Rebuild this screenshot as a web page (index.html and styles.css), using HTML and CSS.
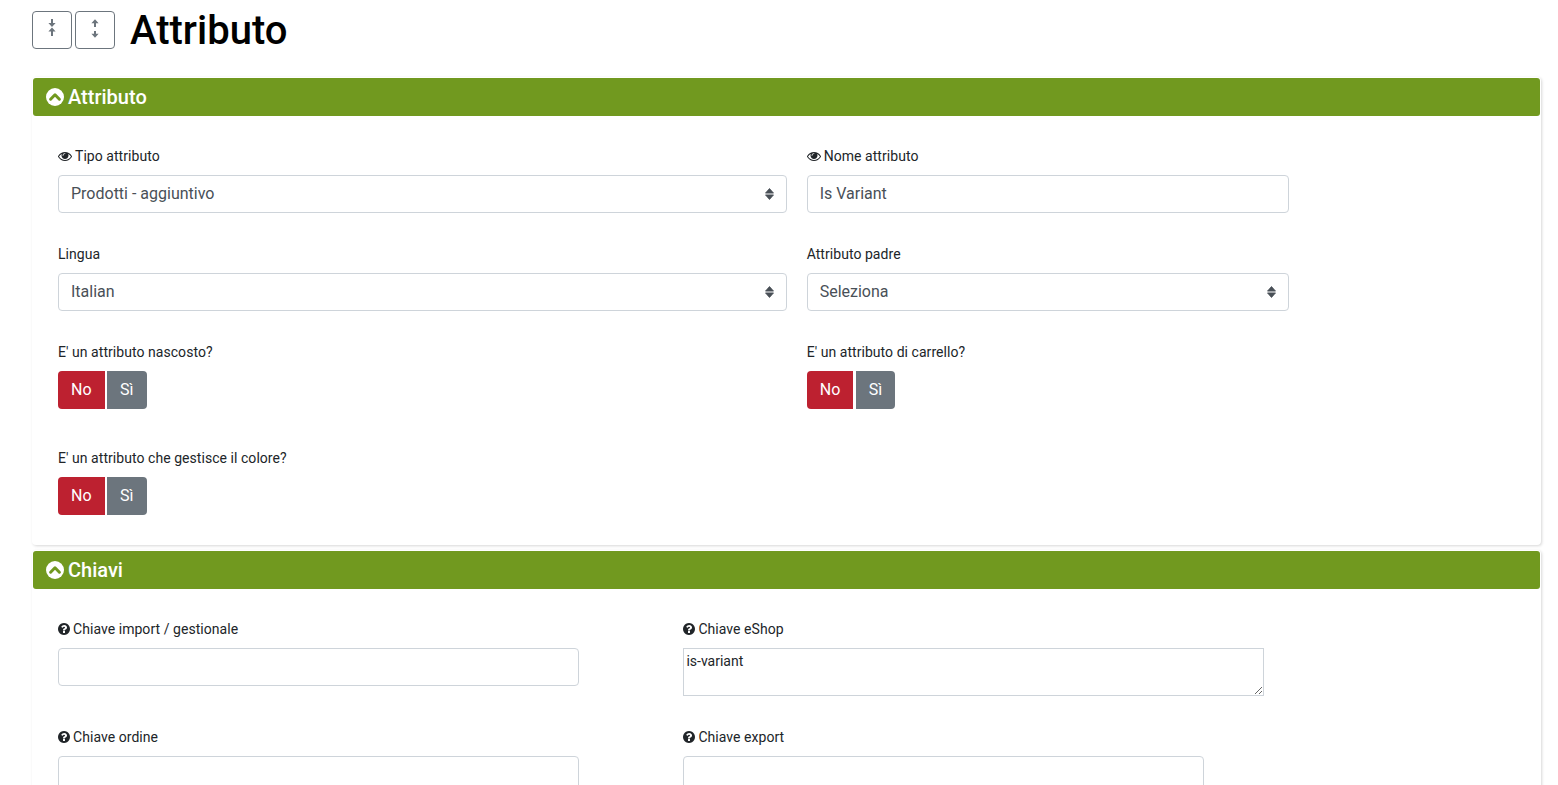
FILE: index.html
```html
<!DOCTYPE html>
<html lang="it">
<head>
<meta charset="utf-8">
<title>Attributo</title>
<link rel="stylesheet" href="styles.css">
</head>
<body>
<svg class="defs" width="0" height="0" aria-hidden="true">
  <symbol id="i-eye" viewBox="0 256 1792 1280"><path d="M1664 960q-152-236-381-353 61 104 61 225 0 185-131.5 316.5t-316.5 131.5-316.5-131.5-131.5-316.5q0-121 61-225-229 117-381 353 133 205 333.5 326.5t434.5 121.5 434.5-121.5 333.5-326.5zm-720-384q0-20-14-34t-34-14q-125 0-214.5 89.5t-89.5 214.5q0 20 14 34t34 14 34-14 14-34q0-86 61-147t147-61q20 0 34-14t14-34zm848 384q0 34-20 69-140 230-376.5 368.5t-499.5 138.5-499.5-139-376.5-368q-20-35-20-69t20-69q140-229 376.5-368t499.5-139 499.5 139 376.5 368q20 35 20 69z"/></symbol>
  <symbol id="i-q" viewBox="128 128 1536 1536"><path d="M1024 1376v-192q0-14-9-23t-23-9h-192q-14 0-23 9t-9 23v192q0 14 9 23t23 9h192q14 0 23-9t9-23zm256-672q0-88-55.5-163t-138.5-116-170-41q-243 0-371 213-15 24 8 42l132 100q7 6 19 6 16 0 25-12 53-68 86-92 34-24 86-24 48 0 85.5 26t37.5 59q0 38-20 61t-68 45q-63 28-115.5 86.5t-52.5 125.5v36q0 14 9 23t23 9h192q14 0 23-9t9-23q0-19 21.5-49.5t54.5-49.5q32-18 49-28.5t46-35 44.5-48 28-60.5 12.5-81zm384 192q0 209-103 385.5t-279.5 279.5-385.5 103-385.5-103-279.5-279.5-103-385.5 103-385.5 279.5-279.5 385.5-103 385.5 103 279.5 279.5 103 385.5z"/></symbol>
  <symbol id="i-up" viewBox="0 0 18 18"><circle cx="9" cy="9" r="9" fill="#fff"/><path d="M4.6 11.2 9 6.8l4.4 4.4" fill="none" stroke="#71991f" stroke-width="3" stroke-linejoin="round" stroke-linecap="round"/></symbol>
</svg>
<div class="page">
  <header class="top">
    <button class="tool" type="button" aria-label="Comprimi">
      <svg class="tool-icon" width="8" height="20" viewBox="0 0 8 20"><path d="M4 0v5M4 12v5" stroke="#6c757d" stroke-width="2" fill="none"/><path d="M.4 4h7.2L4 8zM.4 12.6h7.2L4 8.6z" fill="#6c757d"/></svg>
    </button>
    <button class="tool" type="button" aria-label="Espandi">
      <svg class="tool-icon" width="8" height="20" viewBox="0 0 8 20"><path d="M4 3v5M4 12v5" stroke="#6c757d" stroke-width="2" fill="none"/><path d="M.4 4.2h7.2L4 .2zM.4 14.8h7.2L4 18.8z" fill="#6c757d"/></svg>
    </button>
    <h1 class="title">Attributo</h1>
  </header>

  <section class="card">
    <h2 class="card-head"><svg class="head-icon"><use href="#i-up"/></svg>Attributo</h2>
    <div class="card-body grid-a">
      <div class="field">
        <label class="lbl"><svg class="ico-eye"><use href="#i-eye"/></svg>Tipo attributo</label>
        <select class="ctl sel"><option>Prodotti - aggiuntivo</option></select>
      </div>
      <div class="field">
        <label class="lbl"><svg class="ico-eye"><use href="#i-eye"/></svg>Nome attributo</label>
        <input class="ctl" type="text" value="Is Variant">
      </div>
      <div class="field">
        <label class="lbl">Lingua</label>
        <select class="ctl sel"><option>Italian</option></select>
      </div>
      <div class="field">
        <label class="lbl">Attributo padre</label>
        <select class="ctl sel"><option>Seleziona</option></select>
      </div>
      <div class="field tall">
        <label class="lbl">E' un attributo nascosto?</label>
        <div class="toggle"><span class="opt no">No</span><span class="opt yes">Sì</span></div>
      </div>
      <div class="field tall">
        <label class="lbl">E' un attributo di carrello?</label>
        <div class="toggle"><span class="opt no">No</span><span class="opt yes">Sì</span></div>
      </div>
      <div class="field last">
        <label class="lbl">E' un attributo che gestisce il colore?</label>
        <div class="toggle"><span class="opt no">No</span><span class="opt yes">Sì</span></div>
      </div>
    </div>
  </section>

  <section class="card">
    <h2 class="card-head"><svg class="head-icon"><use href="#i-up"/></svg>Chiavi</h2>
    <div class="card-body grid-b">
      <div class="field">
        <label class="lbl"><svg class="ico-q"><use href="#i-q"/></svg>Chiave import / gestionale</label>
        <input class="ctl" type="text">
      </div>
      <div class="field">
        <label class="lbl"><svg class="ico-q"><use href="#i-q"/></svg>Chiave eShop</label>
        <textarea class="area">is-variant</textarea>
      </div>
      <div class="field">
        <label class="lbl"><svg class="ico-q"><use href="#i-q"/></svg>Chiave ordine</label>
        <input class="ctl" type="text">
      </div>
      <div class="field">
        <label class="lbl"><svg class="ico-q"><use href="#i-q"/></svg>Chiave export</label>
        <input class="ctl short" type="text">
      </div>
    </div>
  </section>
</div>
</body>
</html>
```
FILE: styles.css
```css
* { box-sizing: border-box; }
html, body { margin: 0; height: 785px; overflow: hidden; background: #fff; }
body { font-family: Roboto, "Liberation Sans", sans-serif; font-size: 14px; line-height: 21px; color: #212529; }
.defs { position: absolute; }
.page { margin: 0 17px 0 32px; }

.top { display: flex; align-items: flex-start; height: 60px; padding-top: 11px; margin-bottom: 17px; }
.tool { width: 40px; height: 38px; margin-right: 3px; padding: 0; display: flex; align-items: flex-start; justify-content: center; background: #fff; border: 1px solid #6c757d; border-radius: 4px; }
.tool-icon { margin-top: 7px; }
.title { margin: -4px 0 0 12px; font-size: 40px; line-height: 48px; font-weight: 500; color: #000; }

.card { padding: 1px 1px 0; margin-bottom: 5px; background: #fff; border-radius: 4px; box-shadow: 1px 1px 3px rgba(0,0,0,.16); }
.card-head { display: flex; align-items: center; height: 38px; margin: 0; padding-left: 13px; background: #71991f; color: #fff; font-size: 20px; line-height: 24px; font-weight: 500; border-radius: 3px; }
.head-icon { width: 18px; height: 18px; margin-right: 4px; }
.card-body { display: grid; padding: 30px 25px 30px; row-gap: 31px; }
.grid-a { grid-template-columns: 728.67px 482.33px; column-gap: 20px; }
.grid-b { grid-template-columns: 521px 581px; column-gap: 104.4px; }

.field { min-width: 0; }
.tall { margin-bottom: 8px; }
.last { grid-column: 1; }
.lbl { display: flex; align-items: center; height: 21px; margin-bottom: 8px; letter-spacing: .05px; }
.ico-eye { width: 14px; height: 10px; margin: -1px 3px 0 0; fill: #212529; }
.ico-q { width: 12px; height: 12px; margin: -1px 3px 0 0; fill: #212529; }

.ctl { display: block; width: 100%; height: 38px; padding: 5px 12px 7px; font: 400 16px/24px Roboto, sans-serif; color: #495057; background: #fff; border: 1px solid #ced4da; border-radius: 4px; }
.short { width: 521px; }
.sel { padding: 6px 12px; appearance: none; -webkit-appearance: none; background: #fff url("data:image/svg+xml,%3csvg xmlns='http://www.w3.org/2000/svg' viewBox='0 0 9 11.5'%3e%3cpath fill='%23495057' stroke='%23495057' stroke-width='.8' stroke-linejoin='round' d='M4.5.5L.5 4.9h8zm0 10.5L.5 6.6h8z'/%3e%3c/svg%3e") no-repeat right 12px center / 9px 11.5px; }
.area { display: block; width: 581px; height: 48px; padding: 4px 2px 2px; font: 400 14px/16px Roboto, sans-serif; color: #212529; background: #fff; border: 1px solid #ced4da; border-radius: 0; }

.toggle { display: flex; gap: 2.3px; }
.opt { display: block; height: 38px; padding: 7px 0; text-align: center; font-size: 16px; line-height: 24px; color: #fff; }
.no { width: 46.7px; background: #bd2130; border-radius: 4px 0 0 4px; }
.yes { width: 39.7px; background: #6c757d; border-radius: 0 4px 4px 0; }
```
